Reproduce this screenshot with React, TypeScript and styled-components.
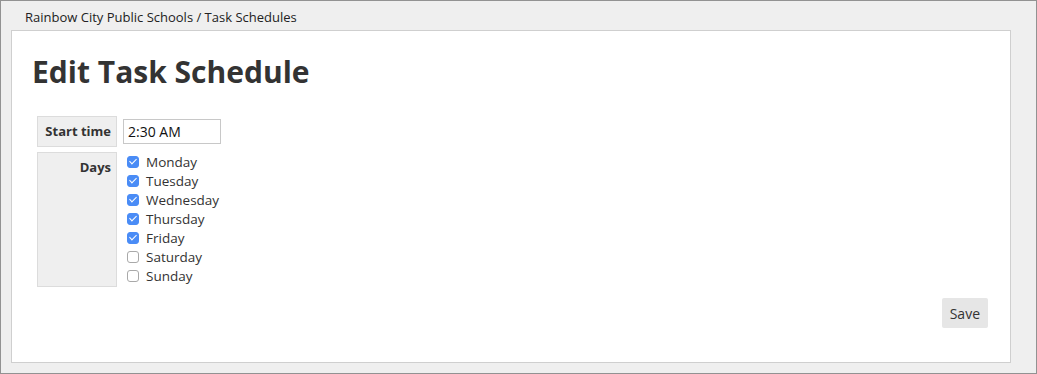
import styled, { createGlobalStyle } from 'styled-components';

const DAYS = [
  { name: 'Monday', checked: true },
  { name: 'Tuesday', checked: true },
  { name: 'Wednesday', checked: true },
  { name: 'Thursday', checked: true },
  { name: 'Friday', checked: true },
  { name: 'Saturday', checked: false },
  { name: 'Sunday', checked: false },
];

function App() {
  return (
    <Frame>
      <GlobalStyle />
      <Breadcrumb>Rainbow City Public Schools / Task Schedules</Breadcrumb>
      <Panel>
        <Title>Edit Task Schedule</Title>
        <Form>
          <Label>Start time</Label>
          <Value>
            <TimeInput defaultValue="2:30 AM" />
          </Value>
          <Label>Days</Label>
          <DayList>
            {DAYS.map(({ name, checked }) => (
              <Day key={name}>
                <Check type="checkbox" defaultChecked={checked} />
                {name}
              </Day>
            ))}
          </DayList>
        </Form>
        <Actions>
          <SaveButton type="button">Save</SaveButton>
        </Actions>
      </Panel>
    </Frame>
  );
}

const GlobalStyle = createGlobalStyle`
  * {
    box-sizing: border-box;
  }

  body {
    margin: 0;
    font-family: 'Open Sans', 'Liberation Sans', sans-serif;
    color: #333;
  }
`;

const Frame = styled.div`
  display: flex;
  flex-direction: column;
  width: 1037px;
  height: 374px;
  border: 1px solid #929292;
  background-color: #efefef;
`;

const Breadcrumb = styled.div`
  height: 29px;
  padding: 7px 0 0 24px;
  font-size: 13px;
  line-height: 18px;
  color: #222;
`;

const Panel = styled.div`
  display: flex;
  flex-direction: column;
  flex: 1;
  margin: 0 25px 10px 10px;
  padding: 20px 22px 0 20px;
  border: 1px solid #cfcfcf;
  background-color: #fff;
`;

const Title = styled.h1`
  margin: 1px 0 0;
  font-size: 30px;
  font-weight: 700;
  line-height: 40px;
  color: #333;
`;

const Form = styled.div`
  display: grid;
  grid-template-columns: 80px auto;
  justify-content: start;
  gap: 5px;
  margin-top: 24px;
  margin-left: 5px;
`;

const Label = styled.div`
  padding: 6px 5px;
  border: 1px solid #dcdcdc;
  background-color: #efefef;
  font-size: 13px;
  font-weight: 700;
  line-height: 17px;
  text-align: right;
  color: #333;
`;

const Value = styled.div`
  display: flex;
  align-items: center;
  padding-left: 1px;
`;

const TimeInput = styled.input`
  width: 98px;
  height: 25px;
  padding: 0 4px;
  border: 1px solid #c8c8c8;
  font-family: 'Open Sans', 'Liberation Sans', sans-serif;
  font-size: 14px;
  color: #111;
  outline: none;
`;

const DayList = styled.div`
  display: flex;
  flex-direction: column;
  padding-bottom: 2px;
`;

const Day = styled.label`
  display: flex;
  align-items: center;
  gap: 7px;
  height: 19px;
  padding-left: 5px;
  font-size: 13.5px;
  color: #333;
`;

const Check = styled.input`
  appearance: none;
  display: grid;
  place-items: center;
  width: 12px;
  height: 12px;
  margin: 0;
  border: 1px solid #a9a9a9;
  border-radius: 3px;
  background-color: #fff;

  &:checked {
    border-color: #4a8cf6;
    background-color: #4a8cf6;
  }

  &:checked::after {
    content: '';
    width: 3px;
    height: 6px;
    margin-top: -2px;
    border: solid #fff;
    border-width: 0 1.6px 1.6px 0;
    transform: rotate(45deg);
  }
`;

const Actions = styled.div`
  display: flex;
  justify-content: flex-end;
  margin-top: 11px;
`;

const SaveButton = styled.button`
  height: 30px;
  padding: 0 8px;
  border: none;
  border-radius: 2px;
  background-color: #e6e6e6;
  font-family: 'Open Sans', 'Liberation Sans', sans-serif;
  font-size: 14px;
  color: #333;
`;

export default App;
